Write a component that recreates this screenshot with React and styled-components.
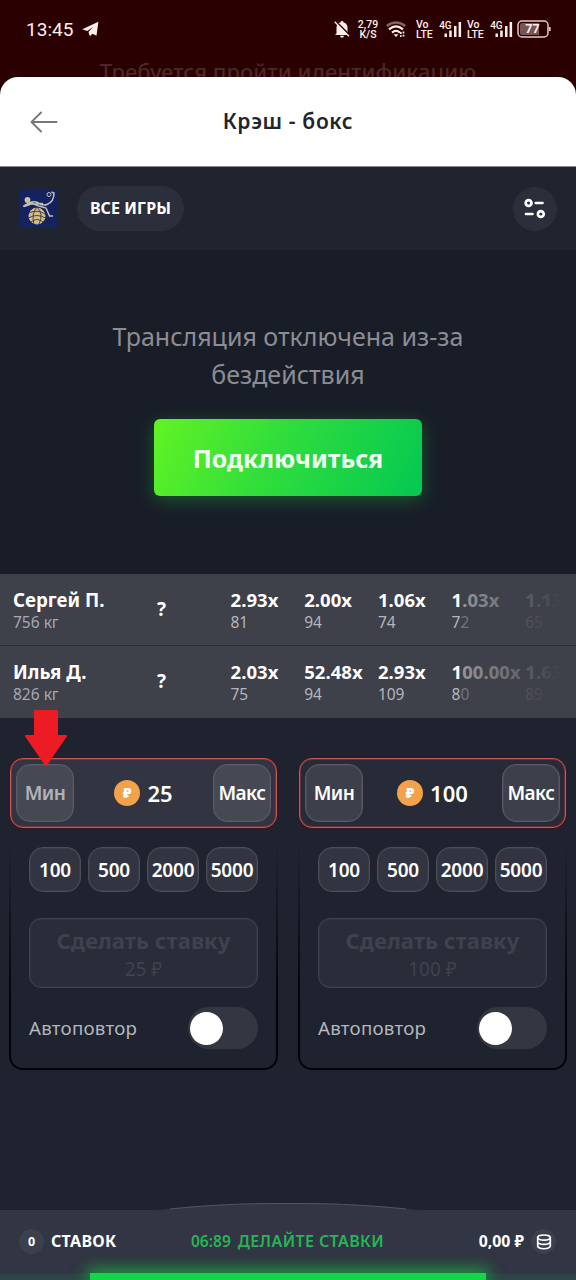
import React from "react";
import styled, { createGlobalStyle } from "styled-components";

const Global = createGlobalStyle`
  * { box-sizing: border-box; }
  body { margin: 0; background: #1f232f; font-family: "Noto Sans", "Open Sans", sans-serif; color: #fff; }
  button { font: inherit; color: inherit; border: 0; padding: 0; margin: 0; background: none; }
`;

const Screen = styled.div`
  width: 576px;
  height: 1280px;
  overflow: hidden;
  display: flex;
  flex-direction: column;
  background: #1f232f;
`;

const Label = styled.span`
  display: block;
  white-space: nowrap;
  font-size: ${(p) => p.$size}px;
  font-weight: ${(p) => p.$weight || 400};
  line-height: ${(p) => p.$line || Math.round(p.$size * 1.3)}px;
  letter-spacing: ${(p) => p.$track || 0}px;
  color: ${(p) => p.$color || "inherit"};
`;

/* top area */
const Top = styled.div`
  height: 167px;
  flex: none;
  background: #2b0001;
  display: flex;
  flex-direction: column;
`;
const StatusBar = styled.div`
  height: 58px;
  padding: 0 25px 0 26px;
  display: flex;
  align-items: center;
  font-family: Roboto, sans-serif;
  color: #ffeeec;
`;
const Clock = styled.span`
  font-size: 19px;
  letter-spacing: 0.05px;
  margin-right: 8px;
`;
const StatusIcons = styled.div`
  margin-left: auto;
  display: flex;
  align-items: center;
`;
const TinyStack = styled.div`
  width: ${(p) => p.$w}px;
  margin-left: ${(p) => p.$ml}px;
  padding-top: 1px;
  font-size: 10.5px;
  line-height: 10px;
  font-weight: 500;
  text-align: ${(p) => p.$align || "left"};
  white-space: nowrap;
`;
const IconBox = styled.span`
  display: flex;
  margin-left: ${(p) => p.$ml || 0}px;
`;
const Behind = styled.div`
  height: 19px;
  overflow: hidden;
  display: flex;
  justify-content: center;
`;
const Sheet = styled.div`
  height: 90px;
  border-radius: 18px 18px 0 0;
  background: #fff;
  border-bottom: 1px solid #8a8a92;
  display: grid;
  grid-template-columns: 60px 1fr 60px;
  align-items: center;
  justify-items: center;
`;
const BackButton = styled.button`
  display: flex;
  justify-self: end;
  margin-right: 2px;
`;

/* toolbar */
const Toolbar = styled.div`
  height: 83px;
  flex: none;
  padding: 0 19px;
  display: flex;
  align-items: center;
  background: #20242f;
`;
const Pill = styled.button`
  width: 107px;
  height: 45px;
  margin-left: 19px;
  border-radius: 23px;
  background: #2b2f3c;
  display: flex;
  align-items: center;
  justify-content: center;
`;
const RoundButton = styled.button`
  width: 44px;
  height: 44px;
  margin-left: auto;
  border-radius: 50%;
  background: #2b2f3c;
  display: flex;
  align-items: center;
  justify-content: center;
`;

/* stream */
const Stream = styled.div`
  height: 324px;
  flex: none;
  padding-top: 67px;
  display: flex;
  flex-direction: column;
  align-items: center;
  background: #191d28;
`;
const ConnectButton = styled.button`
  width: 268px;
  height: 77px;
  margin-top: 26px;
  padding-top: 2px;
  border-radius: 6px;
  background: linear-gradient(115deg, #62f324 0%, #30dd3c 45%, #04c853 100%);
  box-shadow: 0 4px 18px rgba(20, 190, 50, 0.38);
  display: flex;
  align-items: center;
  justify-content: center;
`;

/* fighters */
const Fighters = styled.div`
  height: 144px;
  flex: none;
  position: relative;
`;
const FighterRow = styled.div`
  height: 72px;
  padding: 11px 0 0 13px;
  display: grid;
  grid-template-columns: 143px 74.5px repeat(5, 73.7px);
  background: #3e404a;
  border-bottom: 1px solid ${(p) => (p.$last ? "#3e404a" : "#2c2e38")};
  overflow: hidden;
`;
const Question = styled.div`
  padding: 10px 0 0 1px;
`;
const Fade = styled.div`
  position: absolute;
  top: 0;
  bottom: 0;
  left: 461px;
  right: 0;
  background: linear-gradient(90deg, rgba(62, 64, 74, 0.55), #3e404a 100px);
`;
const Divider = styled.div`
  position: absolute;
  top: 71px;
  left: 461px;
  right: 0;
  height: 1px;
  background: #2c2e38;
`;

/* betting */
const Betting = styled.div`
  flex: 1;
  padding: 40px 9px 0;
  display: flex;
  justify-content: space-between;
  position: relative;
`;
const Pointer = styled.svg`
  position: absolute;
  left: 24px;
  top: -9px;
`;
const Card = styled.div`
  width: 269px;
  height: 312px;
  border-radius: 14px;
  display: flex;
  flex-direction: column;
  background: linear-gradient(#1f232f, #1f232f) padding-box,
    linear-gradient(#1f232f 80px, #171b26 130px, #02040b 240px) border-box;
  border: 2px solid transparent;
  border-top-width: 0;
`;
const Stake = styled.div`
  height: 70px;
  margin: 0 -1px;
  padding: 5px;
  border: 1px solid #d5534f;
  box-shadow: inset 0 0 0 1px rgba(190, 60, 60, 0.4), 0 0 0 1px rgba(90, 10, 10, 0.35);
  border-radius: 13px;
  background: ${(p) => p.$bg};
  display: flex;
  align-items: center;
  justify-content: space-between;
`;
const EdgeButton = styled.button`
  width: 58px;
  height: 58px;
  border: 1px solid #595c66;
  box-shadow: inset 0 0 0 1px rgba(89, 92, 102, 0.35);
  border-radius: 14px;
  background: ${(p) => (p.$light ? "#464953" : "#3d404b")};
  color: ${(p) => (p.$dim ? "#b2b3b9" : "#fff")};
  display: flex;
  align-items: center;
  justify-content: center;
`;
const Amount = styled.div`
  display: flex;
  align-items: center;
  gap: 7px;
`;
const Coin = styled.span`
  width: 26px;
  height: 26px;
  border-radius: 50%;
  background: #f2a24a;
  display: flex;
  align-items: center;
  justify-content: center;
`;
const Body = styled.div`
  padding: 19px 18px 0;
`;
const Chips = styled.div`
  display: grid;
  grid-template-columns: repeat(4, 52px);
  justify-content: space-between;
`;
const Chip = styled.button`
  height: 45px;
  padding-top: 1px;
  border: 1px solid #4b4e59;
  box-shadow: inset 0 0 0 1px rgba(75, 78, 89, 0.3);
  border-radius: 14px;
  background: #323541;
  display: flex;
  align-items: center;
  justify-content: center;
`;
const PlaceBet = styled.button`
  width: 100%;
  height: 70px;
  margin-top: 26px;
  border: 1px solid #40434f;
  box-shadow: inset 0 0 0 1px rgba(64, 67, 79, 0.3);
  border-radius: 12px;
  background: #292c39;
  color: #3f424e;
  display: flex;
  flex-direction: column;
  align-items: center;
  padding-top: 7px;
`;
const RepeatRow = styled.div`
  margin-top: 19px;
  display: flex;
  align-items: center;
  justify-content: space-between;
`;
const Toggle = styled.div`
  width: 70px;
  height: 42px;
  padding: 5px 2px;
  border-radius: 21px;
  background: #343741;
`;
const Knob = styled.div`
  width: 33px;
  height: 33px;
  border-radius: 50%;
  background: #fff;
`;

/* footer */
const Footer = styled.div`
  height: 70px;
  flex: none;
  position: relative;
  background: #323543;
`;
const Arc = styled.svg`
  position: absolute;
  left: 150px;
  top: -8px;
`;
const FooterRow = styled.div`
  height: 63px;
  padding: 0 20px 0 19px;
  display: grid;
  grid-template-columns: 32px 140px 1fr auto 32px;
  align-items: center;
  position: relative;
  z-index: 1;
`;
const Status = styled.div`
  display: flex;
  gap: 7px;
`;
const Badge = styled.div`
  width: 25px;
  height: 25px;
  border-radius: 50%;
  background: #3c3f4d;
  display: flex;
  align-items: center;
  justify-content: center;
  justify-self: ${(p) => p.$side || "start"};
`;
const Track = styled.div`
  height: 7px;
  padding: 0 90px;
  background: linear-gradient(#2f3c45, #29484a);
`;
const Progress = styled.div`
  height: 7px;
  background: #10d648;
  box-shadow: 0 0 16px 3px rgba(16, 200, 66, 0.85);
`;

const Telegram = () => (
  <svg width="17" height="16" viewBox="0 0 17 16">
    <path d="M.3 8.200 16.400.7 14.500 14.800 10.500 12.800 8.500 14.800Q6.800 14.500 6.600 10.800L11.200 5.800 5.300 10Z" fill="#ffeeec" />
  </svg>
);
const BellOff = () => (
  <svg width="16" height="18" viewBox="0 0 16 18">
    <path d="M2.5 13.500V8C2.5 4.700 4 3 6.500 2.500 6.500.5 9.500.5 9.500 2.500 12 3 13.500 4.700 13.500 8V13.500L15 15H1ZM6 15.800H10Q9.700 17.800 8 17.800T6 15.800Z" fill="#ffeeec" />
    <path d="M1.500 1.200 16 15.700" stroke="#2b0001" strokeWidth="2" />
    <path d="M.7 1.800 15 16.300" stroke="#ffeeec" strokeWidth="1.300" />
  </svg>
);
const Wifi = () => (
  <svg width="20" height="17" viewBox="0 0 20 17" fill="none" strokeWidth="2.200">
    <path d="M.8 5Q10-2 19.200 5" stroke="#866563" />
    <path d="M3 8.300Q10 2.600 17 8.300M6 11.600Q10 8.200 14 11.600" stroke="#ffeeec" />
    <path d="M7.500 13.200H12.500L10 16Z" fill="#ffeeec" />
    <path d="M14.800 11V13M14.800 14.200V16M17.500 10.500V12.500M17.500 13.700V15.500" stroke="#ffeeec" strokeWidth="1.700" />
  </svg>
);
const Signal = () => (
  <svg width="24" height="25" viewBox="0 -4 24 25" fill="#ffeeec">
    <text x="0.2" y="8" fontFamily="Roboto, sans-serif" fontSize="11" fontWeight="500" textLength="12.500" lengthAdjust="spacingAndGlyphs">4G</text>
    <rect x="5.500" y="12.500" width="2.500" height="3.500" />
    <rect x="10.200" y="9.500" width="2.500" height="6.500" />
    <rect x="15" y="5" width="2.500" height="11" />
    <rect x="19.600" y="1" width="2.500" height="15" />
  </svg>
);
const Battery = () => (
  <svg width="34" height="18" viewBox="0 0 34 18">
    <rect x="1" y="1" width="30" height="16" rx="4" fill="none" stroke="#e9c9c6" strokeWidth="1.500" />
    <path d="M5 3H22V15H5Q3 15 3 13V5Q3 3 5 3Z" fill="#755655" />
    <path d="M32.800 7V11" stroke="#e9c9c6" strokeWidth="1.600" />
    <text x="15.500" y="13.300" textAnchor="middle" fontFamily="Roboto, sans-serif" fontSize="12.500" fontWeight="700" fill="#ffeeec">77</text>
  </svg>
);
const BackArrow = () => (
  <svg width="28" height="22" viewBox="0 0 28 22" fill="none" stroke="#77777a" strokeWidth="1.900" strokeLinecap="round" strokeLinejoin="round">
    <path d="M26.500 11H1.500M11 1.500 1.500 11 11 20.500" />
  </svg>
);
const Logo = () => (
  <svg width="39" height="39" viewBox="0 0 39 39" fill="none" stroke="#c2c0bd">
    <rect width="39" height="39" fill="#152260" stroke="none" />
    <circle cx="8.500" cy="11" r="2.900" fill="#d1c19a" stroke="none" />
    <path d="M4 17.500C9 14 13 11.500 17 13S23 17.500 28 15.500 35 10 35 4L32.500 3M12 14 20 17 27 19 30.500 27H34M5 17.500 12 15 24 14.500" strokeWidth="1.500" />
    <circle cx="30" cy="5.500" r="2" strokeWidth="1" />
    <circle cx="18" cy="27" r="8" fill="#d5bd83" stroke="#d5bd83" />
    <path d="M10 24Q18 20 26 25M9.500 29Q18 24 26.500 29M12 33Q18 28 24 33M18 18Q12 25 15 35M18 18Q25 25 20 35" stroke="#343654" strokeWidth="0.900" />
  </svg>
);
const Sliders = () => (
  <svg width="22" height="22" viewBox="0 0 22 22" fill="none" stroke="#fff" strokeWidth="2.700" strokeLinecap="round">
    <circle cx="4.600" cy="5" r="2.900" />
    <path d="M11.800 5H18.500M2 16H8.500" />
    <circle cx="16.800" cy="16" r="2.900" />
  </svg>
);
const Coins = () => (
  <svg width="16" height="16" viewBox="0 0 16 16" fill="none" stroke="#fff" strokeWidth="1.700">
    <ellipse cx="8" cy="3.600" rx="6.300" ry="2.600" />
    <path d="M1.700 3.600V12.100C1.700 15.600 14.300 15.600 14.300 12.100V3.600M1.700 7.800C1.700 11.300 14.300 11.300 14.300 7.800" />
  </svg>
);

const fighters = [
  { name: "Сергей П.", weight: "756 кг", odds: [["2.93x", 81], ["2.00x", 94], ["1.06x", 74], ["1.03x", 72], ["1.13x", 65]] },
  { name: "Илья Д.", weight: "826 кг", odds: [["2.03x", 75], ["52.48x", 94], ["2.93x", 109], ["100.00x", 80], ["1.63x", 89]] },
];

const BetCard = ({ amount, min, tone }) => (
  <Card>
    <Stake $bg={tone}>
      <EdgeButton $dim={min} $light={min}><Label $size={19} $weight={600} $track={-0.5}>Мин</Label></EdgeButton>
      <Amount>
        <Coin><Label $size={14} $weight={900} $line={16}>₽</Label></Coin>
        <Label $size={22} $weight={600}>{amount}</Label>
      </Amount>
      <EdgeButton $light={min}><Label $size={19} $weight={600} $track={-0.5}>Макс</Label></EdgeButton>
    </Stake>
    <Body>
      <Chips>
        {[100, 500, 2000, 5000].map((v) => (
          <Chip key={v}><Label $size={19} $weight={600} $line={26} $track={-0.2}>{v}</Label></Chip>
        ))}
      </Chips>
      <PlaceBet>
        <Label $size={22.2} $weight={700} $line={29}>Сделать ставку</Label>
        <Label $size={19} $line={28}>{amount} ₽</Label>
      </PlaceBet>
      <RepeatRow>
        <Label $size={18.7} $color="#b4b6bd" $track={0.25}>Автоповтор</Label>
        <Toggle><Knob /></Toggle>
      </RepeatRow>
    </Body>
  </Card>
);

export default function App() {
  return (
    <Screen>
      <Global />
      <Top>
        <StatusBar>
          <Clock>13:45</Clock>
          <Telegram />
          <StatusIcons>
            <IconBox><BellOff /></IconBox>
            <TinyStack $w={22} $ml={7} $align="center">2,79<br />K/S</TinyStack>
            <IconBox $ml={7}><Wifi /></IconBox>
            <TinyStack $w={17} $ml={10}>Vo<br />LTE</TinyStack>
            <IconBox $ml={6}><Signal /></IconBox>
            <TinyStack $w={17} $ml={4}>Vo<br />LTE</TinyStack>
            <IconBox $ml={6}><Signal /></IconBox>
            <IconBox $ml={3}><Battery /></IconBox>
          </StatusIcons>
        </StatusBar>
        <Behind><Label $size={22} $weight={500} $color="#4c2728" $line={26}>Требуется пройти идентификацию</Label></Behind>
        <Sheet>
          <BackButton aria-label="Назад"><BackArrow /></BackButton>
          <Label $size={21} $weight={600} $color="#23242d" $track={0.65}>Крэш - бокс</Label>
        </Sheet>
      </Top>
      <Toolbar>
        <Logo />
        <Pill><Label $size={16} $weight={700} $track={0.1}>ВСЕ ИГРЫ</Label></Pill>
        <RoundButton aria-label="Настройки"><Sliders /></RoundButton>
      </Toolbar>
      <Stream>
        <Label $size={25} $line={38} $color="#8b8d93">Трансляция отключена из-за</Label>
        <Label $size={25} $line={38} $color="#8b8d93">бездействия</Label>
        <ConnectButton><Label $size={25} $weight={700} $color="#effff0">Подключиться</Label></ConnectButton>
      </Stream>
      <Fighters>
        {fighters.map((f, i) => (
          <FighterRow key={f.name} $last={i === 1}>
            <div>
              <Label $size={18.7} $weight={700} $line={30}>{f.name}</Label>
              <Label $size={15.5} $line={14} $color="#a6a8af">{f.weight}</Label>
            </div>
            <Question><Label $size={19} $weight={700} $line={28}>?</Label></Question>
            {f.odds.map(([x, n]) => (
              <div key={x}>
                <Label $size={18.5} $weight={700} $line={30} $track={0.05}>{x}</Label>
                <Label $size={15.5} $line={14} $color="#b4b6bc">{n}</Label>
              </div>
            ))}
          </FighterRow>
        ))}
        <Fade />
        <Divider />
      </Fighters>
      <Betting>
        <BetCard amount={25} min tone="#323541" />
        <BetCard amount={100} tone="#272b37" />
        <Pointer width="44" height="60" viewBox="0 0 44 60">
          <path d="M11 2H33V27H42L22 56 2 27H11Z" fill="#ed1c24" stroke="#ed1c24" strokeWidth="2" strokeLinejoin="round" />
        </Pointer>
      </Betting>
      <Footer>
        <Arc width="276" height="9" viewBox="0 0 276 9">
          <path d="M0 9C60 2 100 1.500 138 1.500S216 2 276 9Z" fill="#323543" />
          <path d="M20 7C70 2 100 1.500 138 1.500S206 2 256 7" fill="none" stroke="#52556a" strokeWidth="1" />
        </Arc>
        <FooterRow>
          <Badge><Label $size={12.5} $weight={700}>0</Label></Badge>
          <Label $size={16} $weight={700} $track={0.3}>СТАВОК</Label>
          <Status>
            <Label $size={15.5} $weight={600} $color="#25b556">06:89</Label>
            <Label $size={16} $weight={600} $track={0.4} $color="#25b556">ДЕЛАЙТЕ СТАВКИ</Label>
          </Status>
          <Label $size={15.8} $weight={700}>0,00 ₽</Label>
          <Badge $side="end"><Coins /></Badge>
        </FooterRow>
        <Track><Progress /></Track>
      </Footer>
    </Screen>
  );
}
